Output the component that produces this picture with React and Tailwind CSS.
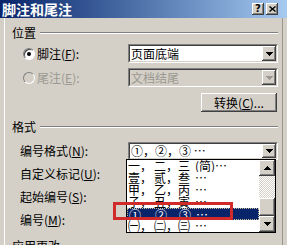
import React from "react";

const raised =
  "bg-[#d4d0c8] shadow-[inset_-1px_-1px_0_#404040,inset_1px_1px_0_#ffffff,inset_-2px_-2px_0_#808080,inset_2px_2px_0_#d4d0c8]";

function DownArrow({ color = "#000000" }) {
  return (
    <svg width="7" height="4" viewBox="0 0 7 4" shapeRendering="crispEdges">
      <path d="M0 0h7v1h-1v1h-1v1h-1v1h-1v-1h-1v-1h-1v-1h-1z" fill={color} />
    </svg>
  );
}

function UpArrow() {
  return (
    <svg width="7" height="4" viewBox="0 0 7 4" shapeRendering="crispEdges">
      <path d="M3 0h1v1h1v1h1v1h1v1h-7v-1h1v-1h1v-1h1z" fill="#000000" />
    </svg>
  );
}

function Combo({ text, disabled }) {
  return (
    <div className="flex h-[19px] w-[150px] border border-t-[#808080] border-l-[#808080] border-b-white border-r-white">
      <div
        className={
          disabled
            ? "flex flex-1 border border-t-[#404040] border-l-[#404040] border-b-[#d4d0c8] border-r-[#d4d0c8] bg-[#d4d0c8]"
            : "flex flex-1 border border-t-[#404040] border-l-[#404040] border-b-[#d4d0c8] border-r-[#d4d0c8] bg-white"
        }
      >
        <span
          className={
            disabled
              ? "flex flex-1 items-center pl-[1px] text-[#9a9890]"
              : "flex flex-1 items-center pl-[1px]"
          }
        >
          {text}
        </span>
        <div className={`flex w-[14px] items-center justify-center ${raised}`}>
          <DownArrow color={disabled ? "#9a9890" : "#000000"} />
        </div>
      </div>
    </div>
  );
}

function GroupHeader({ title }) {
  return (
    <div className="flex h-[12px] items-center">
      <span>{title}</span>
      <div className="ml-[4px] h-0 flex-1 border-t border-b border-t-[#808080] border-b-white" />
    </div>
  );
}

function Row({ a, b, c, d, selected }) {
  return (
    <div
      className={
        selected
          ? "grid h-[12px] grid-cols-[26px_24px_17px_auto] items-center overflow-hidden border border-dotted border-[#c8c0a0] bg-[#0a246a] pl-[1px] text-white"
          : "grid h-[12px] grid-cols-[26px_24px_17px_auto] items-center overflow-hidden pl-[1px]"
      }
    >
      <span>{a}</span>
      <span>{b}</span>
      <span>{c}</span>
      <span>{d}</span>
    </div>
  );
}

export default function App() {
  return (
    <div className="relative h-[245px] w-[287px] overflow-hidden bg-[#d4d0c8] font-['Noto_Sans_CJK_SC',sans-serif] text-[12px] leading-[12px] text-black">
      {/* Title bar */}
      <div className="flex h-[18px] items-center justify-between bg-linear-to-r from-[#0a246a] to-[#a6caf0] pl-[2px] pr-[9px]">
        <span className="text-[14px] font-bold leading-[14px] text-white">脚注和尾注</span>
        <div className="flex gap-[2px]">
          <div className={`flex h-[12px] w-[12px] items-center justify-center text-[10px] font-bold leading-[10px] ${raised}`}>
            <span className="font-['DejaVu_Sans',sans-serif]">?</span>
          </div>
          <div className={`flex h-[12px] w-[12px] items-center justify-center ${raised}`}>
            <svg width="7" height="6" viewBox="0 0 7 6">
              <path d="M0.5 0.5L6.5 5.5M6.5 0.5L0.5 5.5" stroke="#000" strokeWidth="1.4" />
            </svg>
          </div>
        </div>
      </div>

      {/* Body */}
      <div className="ml-[4px] h-[227px] w-[279px] border-l border-r border-l-white border-r-[#9a968e]">
        <div className="pl-[7px] pr-[4px]">
          <div className="pt-[9px]">
            <GroupHeader title="位置" />
          </div>

          <div className="mt-[5px] flex h-[19px] items-center pl-[11px]">
            <div className="flex h-[12px] w-[12px] items-center justify-center rounded-full border border-t-[#808080] border-l-[#808080] border-b-white border-r-white bg-white shadow-[inset_1px_1px_0_#404040]">
              <div className="h-[4px] w-[4px] rounded-full bg-black" />
            </div>
            <span className="ml-[2px]">
              脚注(<u>F</u>):
            </span>
            <div className="ml-auto">
              <Combo text="页面底端" />
            </div>
          </div>

          <div className="mt-[5px] flex h-[19px] items-center pl-[11px]">
            <div className="h-[12px] w-[12px] rounded-full border border-t-[#808080] border-l-[#808080] border-b-white border-r-white bg-[#d4d0c8]" />
            <span className="ml-[2px] text-[#9a9890]">
              尾注(<u>E</u>):
            </span>
            <div className="ml-auto">
              <Combo text="文档结尾" disabled />
            </div>
          </div>

          <div className="mt-[6px] flex justify-end">
            <div className={`mr-[1px] flex h-[19px] w-[76px] items-center justify-center ${raised}`}>
              转换(<u>C</u>)...
            </div>
          </div>

          <div className="mt-[9px]">
            <GroupHeader title="格式" />
          </div>

          <div className="mt-[9px] flex h-[18px] items-center pl-[8px]">
            <span>
              编号格式(<u>N</u>):
            </span>
            <div className="ml-auto">
              <div className="flex h-[18px] w-[150px] border border-t-[#808080] border-l-[#808080] border-b-white border-r-white">
                <div className="flex flex-1 border border-t-[#404040] border-l-[#404040] border-b-[#d4d0c8] border-r-[#d4d0c8] bg-white">
                  <span className="flex flex-1 items-center pl-[1px]">①，②，③ …</span>
                  <div className={`flex w-[14px] items-center justify-center ${raised}`}>
                    <DownArrow />
                  </div>
                </div>
              </div>
            </div>
          </div>

          <div className="mt-[2px] flex h-[23px] items-center pl-[8px]">
            自定义标记(<u>U</u>):
          </div>
          <div className="flex h-[23px] items-center pl-[8px]">
            起始编号(<u>S</u>):
          </div>
          <div className="flex h-[23px] items-center pl-[8px]">
            编号(<u>M</u>):
          </div>

          <div className="mt-[9px]">
            <GroupHeader title="应用更改" />
          </div>
        </div>
      </div>

      {/* Open drop-down list */}
      <div className="absolute left-[126px] top-[159px] flex h-[74px] w-[150px] border border-black bg-white">
        <div className="flex flex-1 flex-col">
          <Row a="一，" b="二，" c="三" d="(简)…" />
          <Row a="壹，" b="贰，" c="叁" d="…" />
          <Row a="甲，" b="乙，" c="丙" d="…" />
          <Row a="子，" b="丑，" c="寅" d="…" />
          <Row a="①，" b="②，" c="③" d="…" selected />
          <Row a="㈠，" b="㈡，" c="㈢" d="…" />
        </div>
        <div className="flex w-[16px] flex-col">
          <div className={`flex h-[16px] items-center justify-center ${raised}`}>
            <UpArrow />
          </div>
          <div className="flex-1 bg-[repeating-conic-gradient(#ffffff_0%_25%,#d4d0c8_0%_50%)] bg-[length:2px_2px]" />
          <div className={`h-[18px] ${raised}`} />
          <div className={`flex h-[16px] items-center justify-center ${raised}`}>
            <DownArrow />
          </div>
        </div>
      </div>

      {/* Red annotation box */}
      <div className="absolute left-[113px] top-[202px] h-[18px] w-[120px] border-[3px] border-[#d02a2a]" />
    </div>
  );
}
